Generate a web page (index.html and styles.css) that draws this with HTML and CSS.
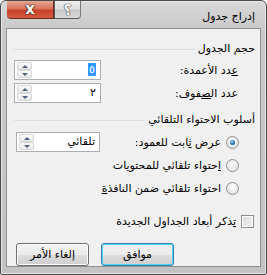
FILE: index.html
```html
<!DOCTYPE html>
<html lang="ar" dir="rtl">
<head>
    <meta charset="UTF-8">
    <title>إدراج جدول</title>
    <link rel="stylesheet" href="styles.css">
</head>
<body>

<div class="window">
    <div class="titlebar">
        <div class="title">إدراج جدول</div>
        <div class="caption-buttons">
            <div class="cap-btn help">؟</div>
            <div class="cap-btn close">x</div>
        </div>
    </div>

    <div class="client">
        <!-- Table size -->
        <div class="group-head"><span>حجم الجدول</span><i class="rule"></i></div>

        <div class="field-row first">
            <label><u>ع</u>دد الأعمدة:</label>
            <div class="spin">
                <span class="value"><b class="sel">٥</b></span>
                <div class="arrows">
                    <span class="arr up"></span>
                    <span class="arr down"></span>
                </div>
            </div>
        </div>

        <div class="field-row">
            <label>عدد ال<u>ص</u>فوف:</label>
            <div class="spin">
                <span class="value">٢</span>
                <div class="arrows">
                    <span class="arr up"></span>
                    <span class="arr down"></span>
                </div>
            </div>
        </div>

        <!-- AutoFit behaviour -->
        <div class="group-head second"><span>أسلوب الاحتواء التلقائي</span><i class="rule"></i></div>

        <div class="option-row first">
            <span class="radio checked"></span>
            <label>عرض <u>ث</u>ابت للعمود:</label>
            <div class="spin narrow">
                <span class="value">تلقائي</span>
                <div class="arrows">
                    <span class="arr up"></span>
                    <span class="arr down"></span>
                </div>
            </div>
        </div>

        <div class="option-row">
            <span class="radio"></span>
            <label><u>ا</u>حتواء تلقائي للمحتويات</label>
        </div>

        <div class="option-row">
            <span class="radio"></span>
            <label>احتواء تلقائي ضمن النافذ<u>ة</u></label>
        </div>

        <div class="option-row check-row">
            <span class="checkbox"></span>
            <label><u>ت</u>ذكر أبعاد الجداول الجديدة</label>
        </div>

        <div class="button-row">
            <button class="btn default">موافق</button>
            <button class="btn">إلغاء الأمر</button>
        </div>
    </div>
</div>

</body>
</html>
```

FILE: styles.css
```css
/* Page */
html, body {
    margin: 0;
    padding: 0;
    background: #ffffff;
}

body {
    font-family: "DejaVu Sans", sans-serif;
    font-size: 11px;
    color: #000;
}

/* Window frame */
.window {
    border: 1px solid #4a4a4a;
    border-radius: 6px 6px 2px 2px;
    background: linear-gradient(to bottom, #d9d9d9 0, #c9c9c9 28px, #c3c3c3 100%);
    display: flex;
    flex-direction: column;
    padding: 0 5px 7px 5px;
    width: 255px;
    height: 266px;
    box-shadow: inset 0 0 0 1px #e8e8e8;
}

/* Title bar */
.titlebar {
    height: 28px;
    display: flex;
    align-items: flex-start;
}

.title {
    margin-top: 9px;
    margin-right: 6px;
    font-size: 11px;
    line-height: 14px;
    color: #000;
}

.caption-buttons {
    margin-right: auto;
    margin-left: 1px;
    display: flex;
    height: 18px;
}

.cap-btn {
    height: 17px;
    border: 1px solid #585858;
    border-top: none;
    display: flex;
    align-items: center;
    justify-content: center;
    font-weight: bold;
    line-height: 1;
}

.cap-btn.help {
    width: 25px;
    border-radius: 0 0 4px 0;
    border-right-color: #7a7a7a;
    background: linear-gradient(to bottom, #f0f0f0 0, #dedede 45%, #c9c9c9 55%, #d8d8d8 100%);
    color: #ffffff;
    font-size: 14px;
    text-shadow: 0 0 1px #444, 0 0 1px #444, 0 0 1px #444;
}

.cap-btn.close {
    width: 46px;
    border-radius: 0 0 0 4px;
    border-left: none;
    border-color: #6b2a1e;
    background: linear-gradient(to bottom, #e7a797 0, #d8735b 45%, #c7412b 55%, #d45c40 100%);
    color: #ffffff;
    font-size: 15px;
    text-shadow: 0 0 1px #3a1a12, 0 0 1px #3a1a12, 0 0 2px #3a1a12;
}

/* Client area */
.client {
    flex: 1;
    border: 1px solid #8e8f8f;
    background: #f0f0f0;
    display: flex;
    flex-direction: column;
}

/* Group headings with a line */
.group-head {
    display: flex;
    align-items: center;
    margin-top: 13px;
    padding-right: 5px;
    padding-left: 7px;
    line-height: 14px;
    height: 14px;
}

.group-head .rule {
    flex: 1;
    height: 0;
    border-top: 1px solid #d5dfe5;
    margin-right: 3px;
    margin-top: 1px;
}

.group-head.second {
    margin-top: 10px;
}

/* Label + spinner rows */
.field-row {
    display: flex;
    align-items: center;
    justify-content: space-between;
    height: 20px;
    margin-top: 3px;
    padding-right: 22px;
    padding-left: 7px;
}

.field-row.first {
    margin-top: 4px;
}

label u {
    text-decoration: underline;
}

/* Spin box */
.spin {
    width: 81px;
    height: 18px;
    border: 1px solid #abadb3;
    background: #fff;
    display: flex;
    align-items: center;
    padding: 0 2px;
}

.spin.narrow {
    width: 78px;
    margin-right: auto;
}

.spin .value {
    flex: 1;
    padding-right: 2px;
    line-height: 14px;
}

.spin .sel {
    font-weight: normal;
    background: #3399ff;
    color: #fff;
    padding: 0 1px;
}

.arrows {
    width: 15px;
    height: 16px;
    display: flex;
    flex-direction: column;
}

.arr {
    flex: 1;
    border: 1px solid #d6d6d6;
    border-radius: 2px;
    background: linear-gradient(to bottom, #fbfbfb, #e8e8e8);
    position: relative;
}

.arr::after {
    content: "";
    position: absolute;
    left: 4px;
    top: 2px;
    width: 0;
    height: 0;
    border-left: 3px solid transparent;
    border-right: 3px solid transparent;
}

.arr.up::after {
    border-bottom: 3px solid #4d6185;
}

.arr.down::after {
    border-top: 3px solid #4d6185;
}

/* Radio / checkbox rows */
.option-row {
    display: flex;
    align-items: center;
    height: 20px;
    margin-top: 3px;
    padding-right: 21px;
    padding-left: 9px;
}

.option-row.first {
    margin-top: 5px;
}

.option-row label {
    margin-right: 5px;
}

.radio {
    width: 11px;
    height: 11px;
    border: 1px solid #8e8f8f;
    border-radius: 50%;
    background: radial-gradient(circle at 50% 40%, #ffffff 0, #e6e6e6 70%, #d0d0d0 100%);
    display: flex;
    align-items: center;
    justify-content: center;
}

.radio.checked::after {
    content: "";
    width: 5px;
    height: 5px;
    border-radius: 50%;
    background: radial-gradient(circle at 40% 35%, #8ad0f5 0, #1d70b5 60%, #0f4e8c 100%);
}

.check-row {
    margin-top: 13px;
    padding-right: 6px;
}

.checkbox {
    width: 11px;
    height: 11px;
    border: 1px solid #8e8f8f;
    background: linear-gradient(135deg, #d8d8d8, #f4f4f4);
    box-shadow: inset 0 0 0 1px #ffffff;
}

/* Buttons */
.button-row {
    display: flex;
    gap: 12px;
    padding-right: 86px;
    margin-top: 12px;
}

.btn {
    width: 73px;
    height: 23px;
    font-family: "DejaVu Sans", sans-serif;
    font-size: 11px;
    border: 1px solid #707070;
    border-radius: 3px;
    background: linear-gradient(to bottom, #f2f2f2 0, #ebebeb 50%, #dddddd 50%, #cfcfcf 100%);
    box-shadow: inset 0 0 0 1px #fcfcfc;
    padding: 0;
}

.btn.default {
    border-color: #3c7fb1;
    box-shadow: inset 0 0 0 1px #48d5f3;
}
```
